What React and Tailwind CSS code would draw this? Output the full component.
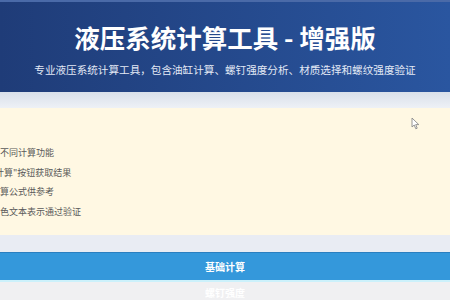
const font = { fontFamily: '"Noto Sans CJK SC", "Noto Sans", sans-serif' };

const steps = [
  { text: "不同计算功能", shift: "ml-0" },
  { text: "计算\"按钮获取结果", shift: "-ml-[5px]" },
  { text: "算公式供参考", shift: "ml-0" },
  { text: "色文本表示通过验证", shift: "ml-0" },
];

export default function App() {
  return (
    <div className="w-[450px] h-[300px] overflow-hidden bg-[#eef0f4]" style={font}>
      <header className="h-[92px] bg-gradient-to-r from-[#1f3c78] to-[#2a56a0] border-t-2 border-[#4a6aa8] flex flex-col items-center">
        <h1 className="mt-[17px] text-[25.5px] leading-[36px] font-bold text-white">液压系统计算工具 - 增强版</h1>
        <p className="mt-[8px] text-[10.6px] leading-[14px] text-[#e3e9f5]">
          专业液压系统计算工具，包含油缸计算、螺钉强度分析、材质选择和螺纹强度验证
        </p>
      </header>

      <div className="h-[16px] bg-gradient-to-b from-[#d9e0ea] to-[#eef1f6]" />

      <section className="relative h-[127px] bg-[#fff8e3] overflow-hidden pt-[39px]">
        <ul className="flex flex-col gap-[8.5px] text-[9px] leading-[11px] text-[#5a5a5a]">
          {steps.map((s) => (
            <li key={s.text} className={`whitespace-nowrap ${s.shift}`}>{s.text}</li>
          ))}
        </ul>
        <svg className="absolute left-[411px] top-[9px]" width="9" height="13" viewBox="0 0 9 13">
          <path d="M1 1 L1 10 L3.2 8 L4.8 11.8 L6.2 11.2 L4.7 7.6 L7.8 7.6 Z" fill="#fff" stroke="#8a8a8a" strokeWidth="0.9" strokeLinejoin="round" />
        </svg>
      </section>

      <div className="h-[17px] bg-[#e9ecf3]" />

      <button className="w-full h-[28px] bg-[#3498db] border-t border-[#2a7fc0] text-white text-[10px] font-bold flex items-center justify-center">
        基础计算
      </button>
      <div className="h-[2px] bg-[#ccf1fb]" />
      <div className="h-[20px] bg-[#f0f0f2] flex items-center justify-center text-[10px] font-bold text-white">
        螺钉强度
      </div>
    </div>
  );
}
